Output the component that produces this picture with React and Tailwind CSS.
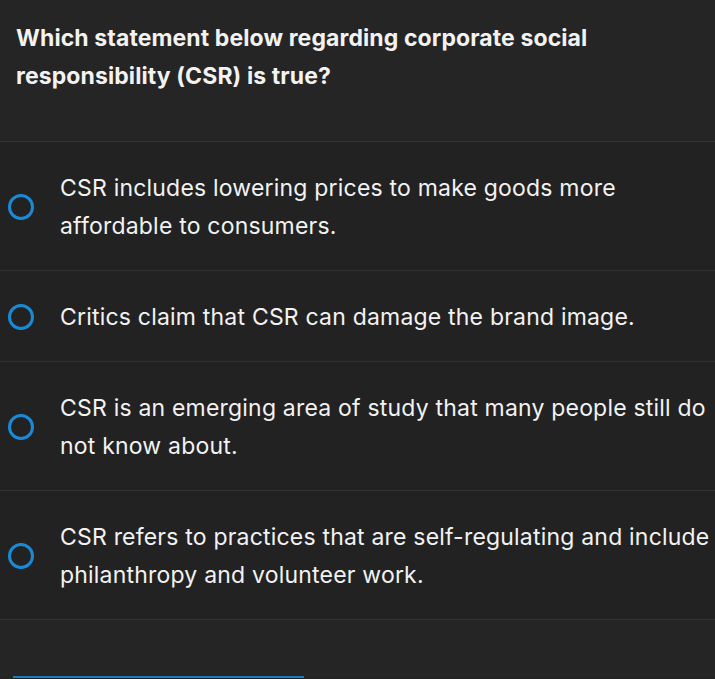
const options = [
  'CSR includes lowering prices to make goods more affordable to consumers.',
  'Critics claim that CSR can damage the brand image.',
  'CSR is an emerging area of study that many people still do not know about.',
  'CSR refers to practices that are self-regulating and include philanthropy and volunteer work.',
]

export default function App() {
  return (
    <div className="min-h-[679px] w-[715px] overflow-hidden bg-[#222222] text-[#f2f2f2] font-['Inter',sans-serif]">
      {/* Question */}
      <div className="bg-[#252525] px-4 pt-[19px] pb-[46px] border-b border-[#333333]">
        <p className="text-[23px] font-bold leading-[38px] tracking-[0.1px] w-[600px]">
          Which statement below regarding corporate social responsibility (CSR) is true?
        </p>
      </div>

      {options.map((text) => (
        <Option key={text} text={text} />
      ))}

      <div className="h-[58px] bg-[#252525] flex items-end pl-[13px]">
        <div className="h-[2px] w-[291px] bg-[#1a7cc0]" />
      </div>
    </div>
  )
}

function Option({ text }) {
  return (
    <div className="flex items-center border-b border-[#333333] pt-[27px] pb-[25px]">
      <div className="w-[60px] shrink-0 flex justify-center pr-[18px]">
        <span className="block h-[26px] w-[26px] rounded-full border-[3px] border-[#1b8ad6]" />
      </div>
      <p className="text-[23px] leading-[38px] tracking-[0.2px]">{text}</p>
    </div>
  )
}
